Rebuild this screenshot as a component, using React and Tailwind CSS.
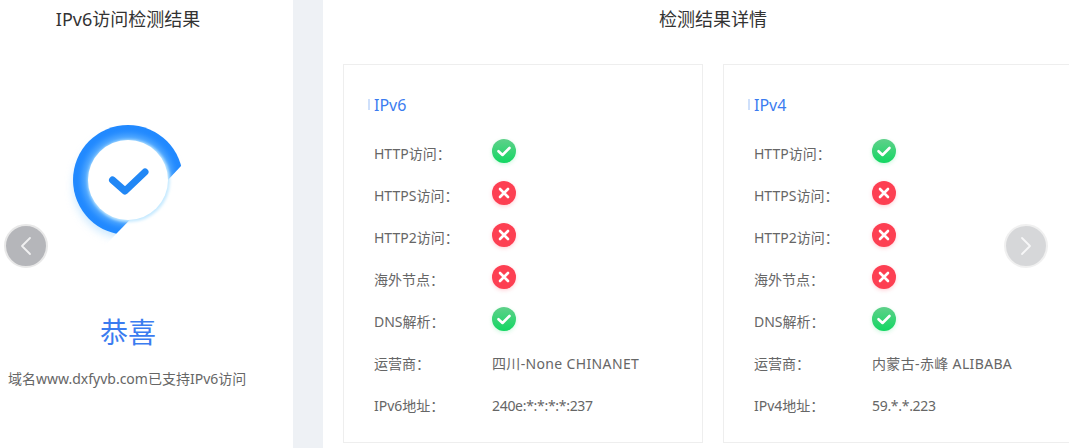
import React from 'react'

const FONT = 'font-["Noto_Sans","Noto_Sans_CJK_SC",sans-serif]'

const OkIcon = () => (
  <svg width="36" height="36" viewBox="0 0 36 36" className="block">
    <defs>
      <linearGradient id="okFill" x1="0" y1="0" x2="0" y2="1">
        <stop offset="0" stopColor="#5fd08a" />
        <stop offset="1" stopColor="#12d762" />
      </linearGradient>
      <filter id="okGlow" x="-40%" y="-40%" width="180%" height="180%">
        <feGaussianBlur stdDeviation="2.5" />
      </filter>
    </defs>
    <circle cx="18" cy="19.5" r="11" fill="#12d762" opacity="0.3" filter="url(#okGlow)" />
    <circle cx="18" cy="18" r="12" fill="url(#okFill)" />
    <path d="M12.5 18.2l4 3.8 7-7" fill="none" stroke="#fff" strokeWidth="2.6" strokeLinecap="round" strokeLinejoin="round" />
  </svg>
)

const FailIcon = () => (
  <svg width="36" height="36" viewBox="0 0 36 36" className="block">
    <defs>
      <filter id="failGlow" x="-40%" y="-40%" width="180%" height="180%">
        <feGaussianBlur stdDeviation="2.5" />
      </filter>
    </defs>
    <circle cx="18" cy="19.5" r="11" fill="#ff4058" opacity="0.35" filter="url(#failGlow)" />
    <circle cx="18" cy="18" r="12" fill="#fd3f52" />
    <path d="M14 14l8 8M22 14l-8 8" fill="none" stroke="#fff" strokeWidth="2.6" strokeLinecap="round" />
  </svg>
)

const Logo = () => (
  <svg width="130" height="130" viewBox="0 0 130 130" className="block">
    <defs>
      <clipPath id="ringCut">
        <polygon points="0,0 130,0 130,36.400 40.600,130 0,130" />
      </clipPath>
      <radialGradient id="innerGlow" gradientUnits="userSpaceOnUse" cx="65" cy="63" r="55">
        <stop offset="0.7" stopColor="#8fd0ff" stopOpacity="0.8" />
        <stop offset="0.84" stopColor="#5fb2ff" stopOpacity="0.35" />
        <stop offset="0.95" stopColor="#2189ff" stopOpacity="0" />
      </radialGradient>
      <filter id="outerBlur" x="-30%" y="-30%" width="160%" height="160%">
        <feGaussianBlur stdDeviation="5" />
      </filter>
      <filter id="rimBlur" x="-20%" y="-20%" width="140%" height="140%">
        <feGaussianBlur stdDeviation="1.500" />
      </filter>
    </defs>
    <g clipPath="url(#ringCut)">
      <circle cx="63" cy="69" r="52" fill="#9ad3ff" opacity="0.55" filter="url(#outerBlur)" />
      <circle cx="65" cy="63" r="55" fill="#2189ff" />
      <circle cx="65" cy="63" r="55" fill="url(#innerGlow)" />
    </g>
    <circle cx="66" cy="64" r="41" fill="#c4e9ff" filter="url(#rimBlur)" />
    <circle cx="65" cy="63" r="40" fill="#fff" />
    <path d="M49.500 63l12.500 11 20-19" fill="none" stroke="#2187f5" strokeWidth="7" strokeLinecap="round" strokeLinejoin="round" />
  </svg>
)

const ArrowBtn = ({ dir, className }) => (
  <div className={`absolute top-[224px] w-11 h-11 rounded-full border-2 flex items-center justify-center ${className}`}>
    <svg width="14" height="20" viewBox="0 0 14 20">
      <path d={dir === 'left' ? 'M11 2L3 10l8 8' : 'M3 2l8 8-8 8'} fill="none" stroke="#fff" strokeOpacity="0.8" strokeWidth="1.800" strokeLinecap="round" strokeLinejoin="round" />
    </svg>
  </div>
)

const Row = ({ label, value, status, valueClass = '' }) => (
  <div className="h-[42px] flex items-center">
    <span className="w-[118px] shrink-0 text-[14px] text-[#666]">{label}</span>
    {status === undefined ? (
      <span className={`text-[14px] text-[#666] whitespace-nowrap ${valueClass}`}>{value}</span>
    ) : (
      <span className="-ml-[6px] -mt-[4px]">{status ? <OkIcon /> : <FailIcon />}</span>
    )}
  </div>
)

const DetailCard = ({ title, addrLabel, isp, addr }) => (
  <div className="w-[360px] shrink-0 h-[379px] bg-white border border-[#eeeeee] pl-[30px] pt-[30px]">
    <div className="relative h-5 flex items-center text-[16px] leading-5 text-[#3b7cf0]">
      <span className="absolute -left-[6px] top-[4px] w-[2px] h-[11px] bg-[#cfe0fb]" />
      {title}
    </div>
    <div className="mt-[17px]">
      <Row label="HTTP访问：" status={true} />
      <Row label="HTTPS访问：" status={false} />
      <Row label="HTTP2访问：" status={false} />
      <Row label="海外节点：" status={false} />
      <Row label="DNS解析：" status={true} />
      <Row label="运营商：" value={isp} valueClass="tracking-[0.35px]" />
      <Row label={addrLabel} value={addr} valueClass="tracking-[-0.3px]" />
    </div>
  </div>
)

export default function App() {
  return (
    <div className={`relative flex h-[448px] w-[1069px] overflow-hidden bg-[#eef1f5] ${FONT}`}>
      {/* 左侧结果 */}
      <div className="w-[293px] shrink-0 bg-white flex flex-col items-start">
        <h2 className="mt-[7px] w-[256px] text-center text-[18px] leading-6 font-normal text-[#333]">IPv6访问检测结果</h2>
        <div className="mt-[86px] w-[256px] flex justify-center">
          <Logo />
        </div>
        <div className="mt-[65px] w-[256px] text-center text-[28px] leading-10 text-[#3b7cf0]">恭喜</div>
        <div className="mt-[17px] w-full pl-2 text-[14px] leading-5 text-[#666] whitespace-nowrap">域名www.dxfyvb.com已支持IPv6访问</div>
      </div>

      {/* 右侧详情 */}
      <div className="ml-[30px] flex-1 min-w-0 bg-white">
        <h2 className="mt-[7px] text-center text-[18px] leading-6 font-normal text-[#333] w-[780px]">检测结果详情</h2>
        <div className="mt-[33px] ml-5 flex gap-5">
          <DetailCard title="IPv6" addrLabel="IPv6地址：" isp="四川-None CHINANET" addr="240e:*:*:*:*:237" />
          <DetailCard title="IPv4" addrLabel="IPv4地址：" isp="内蒙古-赤峰 ALIBABA" addr="59.*.*.223" />
        </div>
      </div>

      <ArrowBtn dir="left" className="left-[4px] bg-[#b5b6ba] border-[#e8e8e8]" />
      <ArrowBtn dir="right" className="left-[1004px] bg-[#d6d7d9] border-[#f0f0f0]" />
    </div>
  )
}
